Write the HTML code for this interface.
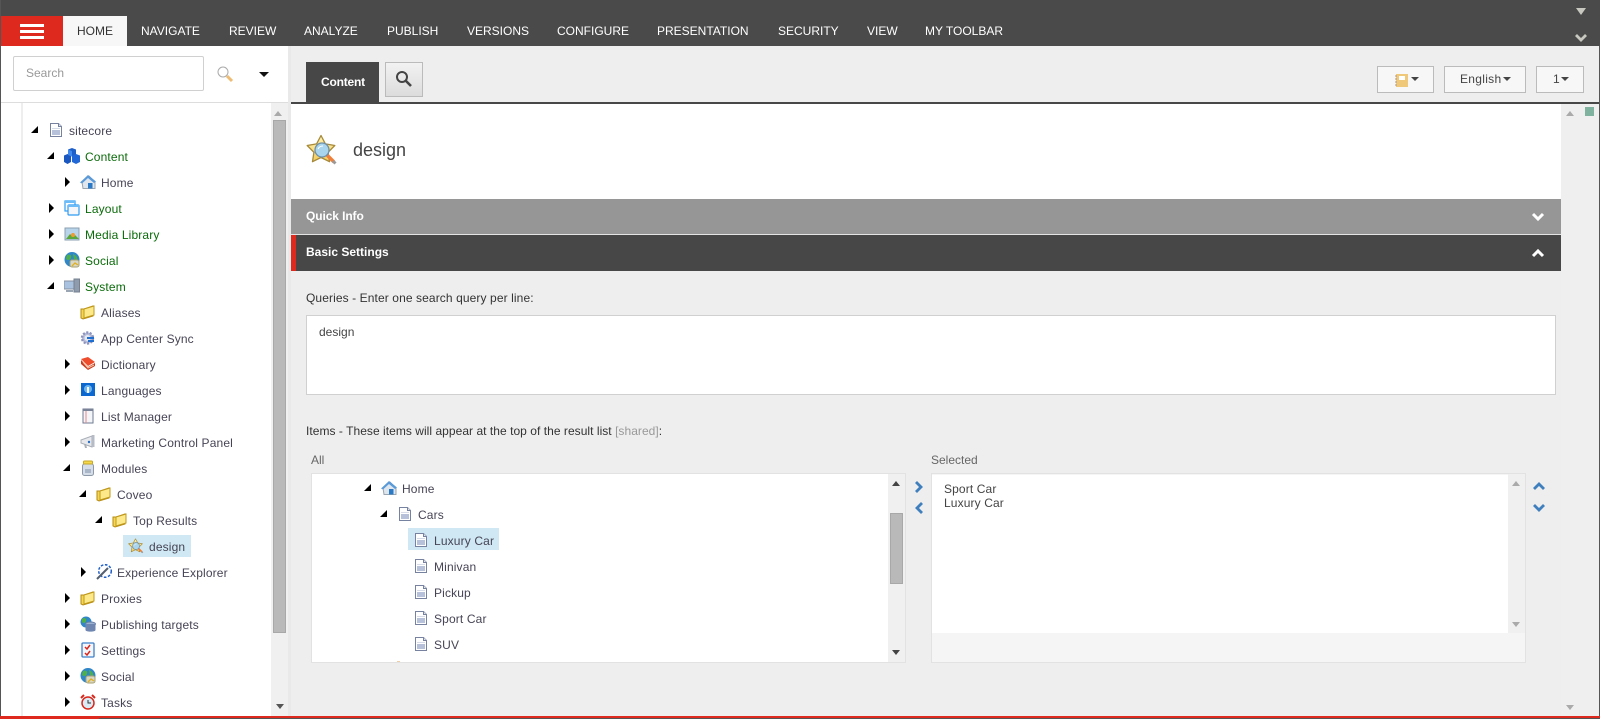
<!DOCTYPE html>
<html lang="en"><head><meta charset="utf-8"><title>Content Editor</title>
<style>
html,body{margin:0;padding:0;width:1600px;height:719px;overflow:hidden;background:#eee}
body{position:relative;font:12px/20px "Liberation Sans",Arial,sans-serif;color:#444}
div,span,svg{position:absolute;display:block}
.n{top:21px;color:#fff;font-size:12px;line-height:20px;white-space:nowrap}
.t{white-space:nowrap;color:#474455;height:20px;margin-top:1px;letter-spacing:.14px}
.g{color:#0b6b0b}
.r{width:0;height:0;border-style:solid;border-width:5px 0 5px 5px;border-color:transparent transparent transparent #000}
.d{width:0;height:0;border-style:solid;border-width:0 0 7px 7px;border-color:transparent transparent #000 transparent;margin:-1px 0 0 -1px}
.i{width:16px;height:16px}
.btn{background:#f7f7f7;border:1px solid #bbb;box-sizing:border-box;height:27px;top:66px}
.c{width:0;height:0;border-style:solid;border-width:4px 4px 0 4px;border-color:#444 transparent transparent transparent}
.up{width:0;height:0;border-style:solid;border-width:0 4px 5px 4px;border-color:transparent transparent #444 transparent}
.dn{width:0;height:0;border-style:solid;border-width:5px 4px 0 4px;border-color:#444 transparent transparent transparent}
</style></head><body>
<svg width="0" height="0" style="position:absolute">
<defs>
<linearGradient id="sg" x1="0" y1="0" x2="0" y2="1"><stop offset="0" stop-color="#fff4b8"/><stop offset="1" stop-color="#f4cb58"/></linearGradient>
<symbol id="doc" viewBox="0 0 16 16"><path d="M2.5 1.500h8l3 3v10h-11z" fill="#fff" stroke="#76829f"/><path d="M10.500 1.500v3h3" fill="#dfe4ee" stroke="#76829f"/><rect x="4" y="8" width="8" height="5" fill="#b7c2da"/><rect x="4" y="6" width="8" height="1" fill="#d5dbe8"/></symbol>
<symbol id="cube" viewBox="0 0 16 16"><path d="M4 1.500L8 0l4 1.500V7L8 8.500 4 7z" fill="#1f5fc8"/><path d="M0 7.500L3.500 6 7 7.500V14l-3.500 2L0 14z" fill="#1b57c0"/><path d="M8 7.500L12 6l4 1.500V14l-4 2-4-2z" fill="#2168d6"/><path d="M4 1.500L8 3v5.500L4 7z" fill="#3f8aec"/></symbol>
<symbol id="home" viewBox="0 0 16 16"><path d="M2 8l7-6 6 6v6.500H3z" fill="#dfe6ee" stroke="#9aa5b0"/><path d="M0 8.500L8 1l8 6.500-2 1.500-6-5-6 5.500z" fill="#5a9ad8"/><rect x="8" y="9" width="4.500" height="5.500" fill="#2a7ac8"/></symbol>
<symbol id="lay" viewBox="0 0 16 16"><rect x="1" y="1" width="10" height="10" fill="#fff" stroke="#2f9cf2" stroke-width="1.200"/><rect x="1" y="1" width="10" height="2" fill="#6dbcf8"/><rect x="4" y="5" width="11" height="10" rx="1" fill="#f4f6fa" stroke="#2f9cf2" stroke-width="1.200"/><rect x="4" y="5" width="11" height="2" fill="#6dbcf8"/></symbol>
<symbol id="med" viewBox="0 0 16 16"><rect x="1" y="2" width="14" height="12" fill="#b8d4ea" stroke="#8a9fb0"/><path d="M2 13l4-5 3 3 2-2 4 4z" fill="#5aa83c"/><circle cx="9" cy="9" r="2" fill="#f09a30"/></symbol>
<symbol id="glob" viewBox="0 0 16 16"><circle cx="8" cy="7.500" r="7.500" fill="#2f86c8"/><path d="M3 3c3-1 5 0 4 3S3 8 2 7zM9 2c3 1 5 4 4 6l-3-1z" fill="#4fb04a"/><rect x="6" y="8" width="9" height="7" rx="2" fill="#d7d7c8" stroke="#a9a070"/><path d="M8 14l3-3 3 2" stroke="#e0b020" fill="none" stroke-width="1.300"/></symbol>
<symbol id="sys" viewBox="0 0 16 16"><rect x="0" y="3" width="10" height="8" fill="#a9c2e0" stroke="#8893a3"/><rect x="2" y="12" width="7" height="2" fill="#9aa5b3"/><rect x="10" y="1" width="5.500" height="13" fill="#8f9cae" stroke="#76808f"/></symbol>
<symbol id="fol" viewBox="0 0 16 16"><path d="M1 5h3l9-3v10l-10 3-2-1z" fill="#f7d64f" stroke="#b58a12"/><path d="M4 5l10-3v9l-10 3z" fill="#fde88a" stroke="#c09a1c"/></symbol>
<symbol id="gear" viewBox="0 0 16 16"><circle cx="7.500" cy="8" r="5.500" fill="#b7bcd9" stroke="#8c93bd" stroke-width="2.400" stroke-dasharray="2 1.500"/><circle cx="7.500" cy="8" r="3" fill="#e7e9f2"/><path d="M7 8h7M8 11h6" stroke="#1f6fd0" stroke-width="2"/></symbol>
<symbol id="book" viewBox="0 0 16 16"><path d="M1 3l7-2 7 5-7 4z" fill="#ee4d2d"/><path d="M1 4l7 7 7-4v3l-7 4-7-6z" fill="#c93a20"/><path d="M3 6l5 6 6-3" stroke="#f7c4a0" fill="none"/></symbol>
<symbol id="lang" viewBox="0 0 16 16"><rect x="1" y="1" width="14" height="13" fill="#0c68cf"/><circle cx="8" cy="7" r="4" fill="#6cb6f0"/><rect x="7" y="5" width="2" height="6" fill="#fff"/></symbol>
<symbol id="list" viewBox="0 0 16 16"><rect x="3" y="1" width="10" height="14" fill="#f3f5f9" stroke="#6f7a92"/><rect x="3" y="1" width="10" height="2" fill="#7a8298"/><path d="M6 3v12" stroke="#e88"/></symbol>
<symbol id="meg" viewBox="0 0 16 16"><path d="M1 6l11-4v11L1 9z" fill="#e6e8ec" stroke="#aab0b8"/><rect x="12" y="1" width="2.500" height="12" fill="#b6bcc6"/><path d="M4 10l1 4h2l-1-4z" fill="#aab0b8"/><circle cx="9" cy="8" r="1.200" fill="#2a6fbf"/></symbol>
<symbol id="jar" viewBox="0 0 16 16"><rect x="2.500" y="4" width="11" height="11.500" rx="2" fill="#d4dde8" stroke="#8d99a8"/><rect x="3.500" y="1" width="9" height="3" rx="1" fill="#f4d84a" stroke="#c5a526"/><rect x="5" y="9" width="6" height="4" fill="#a8b6c8"/></symbol>
<symbol id="wand" viewBox="0 0 16 16"><circle cx="9" cy="7" r="6.300" fill="none" stroke="#1f5fc8" stroke-width="1.500" stroke-dasharray="2.600 1.600"/><path d="M1 15L12 4" stroke="#55606e" stroke-width="2"/></symbol>
<symbol id="pub" viewBox="0 0 16 16"><circle cx="6" cy="6" r="5.500" fill="#2f86c8"/><path d="M2 3c2-2 5-1 4 2s-3 2-4 1z" fill="#4fb04a"/><ellipse cx="10.500" cy="8" rx="5" ry="2" fill="#9bb2d2" stroke="#6a7fa5"/><path d="M5.500 8v6c0 1 2 1.600 5 1.600s5-.6 5-1.600V8z" fill="#6f86b0"/></symbol>
<symbol id="chk" viewBox="0 0 16 16"><rect x="2" y="1" width="12" height="14" rx="1" fill="#f3f6fb" stroke="#3f80c8" stroke-width="1.300"/><path d="M5 5l2 2 3-4M5 11l2 2 3-4" stroke="#d8281c" stroke-width="1.500" fill="none"/></symbol>
<symbol id="clk" viewBox="0 0 16 16"><circle cx="8" cy="9" r="6" fill="#d9ecf5" stroke="#d8281c" stroke-width="1.500"/><path d="M1 4l3-3M15 4l-3-3" stroke="#d8281c" stroke-width="2"/><path d="M8 6v3h3" stroke="#333" fill="none"/></symbol>
<symbol id="star" viewBox="0 0 32 32"><path d="M15 1.500L19.400 9.900 28.800 11.500 22.100 18.300 23.500 27.700 15 23.500 6.500 27.700 7.900 18.300 1.200 11.500 10.600 9.900z" fill="url(#sg)" stroke="#a68a3a" stroke-width="1.300" stroke-linejoin="round"/><path d="M21 21l7 7" stroke="#ef7f3a" stroke-width="3.400"/><path d="M27 27l2.500 2.500" stroke="#999" stroke-width="3"/><circle cx="16" cy="16" r="7" fill="#a9d6ee" stroke="#6e8fa8" stroke-width="1.300"/><path d="M12 15c1-2 3-3 5-3" stroke="#fff" fill="none"/></symbol>
</defs></svg>

<!-- top bar -->
<div style="left:0;top:0;width:1600px;height:46px;background:#4a4a4a"></div>
<div style="left:1px;top:16px;width:62px;height:30px;background:#de2a1e"></div>
<div style="left:20px;top:24px;width:24px;height:3px;background:#fff"></div>
<div style="left:20px;top:30px;width:24px;height:3px;background:#fff"></div>
<div style="left:20px;top:36px;width:24px;height:3px;background:#fff"></div>
<div style="left:63px;top:16px;width:64px;height:30px;background:#f7f7f7"></div>
<div class="n" style="left:77px;color:#333">HOME</div>
<div class="n" style="left:141px">NAVIGATE</div>
<div class="n" style="left:229px">REVIEW</div>
<div class="n" style="left:304px">ANALYZE</div>
<div class="n" style="left:387px">PUBLISH</div>
<div class="n" style="left:467px">VERSIONS</div>
<div class="n" style="left:557px">CONFIGURE</div>
<div class="n" style="left:657px">PRESENTATION</div>
<div class="n" style="left:778px">SECURITY</div>
<div class="n" style="left:867px">VIEW</div>
<div class="n" style="left:925px">MY TOOLBAR</div>
<svg style="left:1575px;top:7px" width="12" height="9"><path d="M1 1h10L6 8z" fill="#c8c8c0"/></svg>
<svg style="left:1574px;top:33px" width="14" height="10"><path d="M2 2l5 5 5-5" fill="none" stroke="#c8c8c0" stroke-width="2.800"/></svg>

<!-- left panel -->
<div style="left:1px;top:46px;width:287px;height:670px;background:#fff"></div>
<div style="left:288px;top:46px;width:3px;height:670px;background:#e9e9e9"></div>
<div style="left:0;top:0;width:1px;height:719px;background:#555"></div>
<div style="left:13px;top:56px;width:191px;height:35px;box-sizing:border-box;border:1px solid #d0d0d0;border-radius:2px;background:#fff"></div>
<div style="left:26px;top:63px;color:#999">Search</div>
<svg style="left:216px;top:65px" width="18" height="18"><circle cx="7" cy="7" r="5" fill="#fff" stroke="#aaa" stroke-width="1"/><path d="M11 11l5 5" stroke="#eebc75" stroke-width="3"/></svg>
<div style="left:259px;top:72px;width:0;height:0;border-style:solid;border-width:5px 5px 0 5px;border-color:#111 transparent transparent transparent"></div>
<div style="left:1px;top:102px;width:287px;height:1px;background:#ddd"></div>
<div style="left:21px;top:103px;width:2px;height:613px;background:#eee"></div>
<div style="left:271px;top:103px;width:17px;height:613px;background:#f0f0f0"></div>
<div style="left:274px;top:111px;width:0;height:0;border-style:solid;border-width:0 4px 5px 4px;border-color:transparent transparent #aaa transparent"></div>
<div style="left:273px;top:120px;width:13px;height:513px;background:#b9b9b9;border:1px solid #a8a8a8;box-sizing:border-box"></div>
<div class="dn" style="left:276px;top:704px;border-top-color:#555"></div>

<div class="d" style="left:32px;top:127px"></div><svg class="i" style="left:48px;top:122px"><use href="#doc"/></svg><div class="t" style="left:69px;top:120px">sitecore</div>
<div class="d" style="left:48px;top:153px"></div><svg class="i" style="left:64px;top:148px"><use href="#cube"/></svg><div class="t g" style="left:85px;top:146px">Content</div>
<div class="r" style="left:65px;top:177px"></div><svg class="i" style="left:80px;top:174px"><use href="#home"/></svg><div class="t" style="left:101px;top:172px">Home</div>
<div class="r" style="left:49px;top:203px"></div><svg class="i" style="left:64px;top:200px"><use href="#lay"/></svg><div class="t g" style="left:85px;top:198px">Layout</div>
<div class="r" style="left:49px;top:229px"></div><svg class="i" style="left:64px;top:226px"><use href="#med"/></svg><div class="t g" style="left:85px;top:224px">Media Library</div>
<div class="r" style="left:49px;top:255px"></div><svg class="i" style="left:64px;top:252px"><use href="#glob"/></svg><div class="t g" style="left:85px;top:250px">Social</div>
<div class="d" style="left:48px;top:283px"></div><svg class="i" style="left:64px;top:278px"><use href="#sys"/></svg><div class="t g" style="left:85px;top:276px">System</div>
<svg class="i" style="left:80px;top:304px"><use href="#fol"/></svg><div class="t" style="left:101px;top:302px">Aliases</div>
<svg class="i" style="left:80px;top:330px"><use href="#gear"/></svg><div class="t" style="left:101px;top:328px">App Center Sync</div>
<div class="r" style="left:65px;top:359px"></div><svg class="i" style="left:80px;top:356px"><use href="#book"/></svg><div class="t" style="left:101px;top:354px">Dictionary</div>
<div class="r" style="left:65px;top:385px"></div><svg class="i" style="left:80px;top:382px"><use href="#lang"/></svg><div class="t" style="left:101px;top:380px">Languages</div>
<div class="r" style="left:65px;top:411px"></div><svg class="i" style="left:80px;top:408px"><use href="#list"/></svg><div class="t" style="left:101px;top:406px">List Manager</div>
<div class="r" style="left:65px;top:437px"></div><svg class="i" style="left:80px;top:434px"><use href="#meg"/></svg><div class="t" style="left:101px;top:432px">Marketing Control Panel</div>
<div class="d" style="left:64px;top:465px"></div><svg class="i" style="left:80px;top:460px"><use href="#jar"/></svg><div class="t" style="left:101px;top:458px">Modules</div>
<div class="d" style="left:80px;top:491px"></div><svg class="i" style="left:96px;top:486px"><use href="#fol"/></svg><div class="t" style="left:117px;top:484px">Coveo</div>
<div class="d" style="left:96px;top:517px"></div><svg class="i" style="left:112px;top:512px"><use href="#fol"/></svg><div class="t" style="left:133px;top:510px">Top Results</div>
<div style="left:123px;top:535px;width:68px;height:22px;background:#cfe8f3"></div><svg class="i" style="left:128px;top:538px"><use href="#star"/></svg><div class="t" style="left:149px;top:536px">design</div>
<div class="r" style="left:81px;top:567px"></div><svg class="i" style="left:96px;top:564px"><use href="#wand"/></svg><div class="t" style="left:117px;top:562px">Experience Explorer</div>
<div class="r" style="left:65px;top:593px"></div><svg class="i" style="left:80px;top:590px"><use href="#fol"/></svg><div class="t" style="left:101px;top:588px">Proxies</div>
<div class="r" style="left:65px;top:619px"></div><svg class="i" style="left:80px;top:616px"><use href="#pub"/></svg><div class="t" style="left:101px;top:614px">Publishing targets</div>
<div class="r" style="left:65px;top:645px"></div><svg class="i" style="left:80px;top:642px"><use href="#chk"/></svg><div class="t" style="left:101px;top:640px">Settings</div>
<div class="r" style="left:65px;top:671px"></div><svg class="i" style="left:80px;top:668px"><use href="#glob"/></svg><div class="t" style="left:101px;top:666px">Social</div>
<div class="r" style="left:65px;top:697px"></div><svg class="i" style="left:80px;top:694px"><use href="#clk"/></svg><div class="t" style="left:101px;top:692px">Tasks</div>

<!-- header of content -->
<div style="left:306px;top:62px;width:73px;height:40px;background:#474747"></div>
<div style="left:321px;top:72px;color:#fff;font-weight:bold;letter-spacing:-.2px">Content</div>
<div style="left:385px;top:62px;width:38px;height:35px;box-sizing:border-box;border:1px solid #bbb;background:linear-gradient(#f2f2f2,#dcdcdc)"></div>
<svg style="left:395px;top:70px" width="18" height="18"><circle cx="7" cy="7" r="5" fill="none" stroke="#444" stroke-width="2"/><path d="M11 11l5 5" stroke="#444" stroke-width="2.600"/></svg>
<div class="btn" style="left:1377px;width:57px"></div>
<svg style="left:1395px;top:74px" width="13" height="13"><rect x="1" width="12" height="13" fill="#f0c87a"/><rect x="4" y="2" width="6" height="4" fill="#fff"/><path d="M0 2h2M0 5h2M0 8h2M0 11h2" stroke="#a98"/></svg>
<div class="c" style="left:1411px;top:77px"></div>
<div class="btn" style="left:1444px;width:82px"></div>
<div style="left:1460px;top:69px;color:#444;letter-spacing:.3px">English</div>
<div class="c" style="left:1503px;top:77px"></div>
<div class="btn" style="left:1536px;width:48px"></div>
<div style="left:1553px;top:69px;color:#444">1</div>
<div class="c" style="left:1561px;top:77px"></div>
<div style="left:291px;top:102px;width:1309px;height:2px;background:#474747"></div>

<!-- content -->
<div style="left:291px;top:104px;width:1270px;height:95px;background:#fff"></div>
<svg style="left:306px;top:134px" width="32" height="32"><use href="#star"/></svg>
<div style="left:353px;top:140px;font-size:18px;color:#444">design</div>
<div style="left:291px;top:199px;width:1270px;height:35px;background:#969696"></div>
<div style="left:306px;top:206px;color:#fff;font-weight:bold;letter-spacing:-.1px">Quick Info</div>
<svg style="left:1531px;top:212px" width="14" height="11"><path d="M2 2l5 5 5-5" fill="none" stroke="#fff" stroke-width="3"/></svg>
<div style="left:291px;top:234px;width:1270px;height:1px;background:#e4e4e4"></div>
<div style="left:291px;top:235px;width:1270px;height:36px;background:#474747"></div>
<div style="left:291px;top:235px;width:5px;height:36px;background:#de2a1e"></div>
<div style="left:306px;top:242px;color:#fff;font-weight:bold">Basic Settings</div>
<svg style="left:1531px;top:248px" width="14" height="11"><path d="M2 8l5-5 5 5" fill="none" stroke="#fff" stroke-width="3"/></svg>

<div style="left:306px;top:288px;color:#333;letter-spacing:.1px">Queries - Enter one search query per line:</div>
<div style="left:306px;top:315px;width:1250px;height:80px;box-sizing:border-box;background:#fff;border:1px solid #d0d0d0"></div>
<div style="left:319px;top:322px;color:#444">design</div>

<div style="left:306px;top:421px;color:#333;letter-spacing:.04px">Items - These items will appear at the top of the result list <span style="position:static;display:inline;color:#999">[shared]</span>:</div>
<div style="left:311px;top:450px;color:#666">All</div>
<div style="left:931px;top:450px;color:#666">Selected</div>

<div style="left:311px;top:473px;width:595px;height:190px;box-sizing:border-box;background:#fff;border:1px solid #e2e2e2"></div>
<div style="left:888px;top:474px;width:17px;height:188px;background:#f0f0f0"></div>
<div class="up" style="left:892px;top:481px"></div>
<div style="left:890px;top:513px;width:13px;height:71px;box-sizing:border-box;background:#b9b9b9;border:1px solid #a8a8a8"></div>
<div class="dn" style="left:892px;top:650px"></div>

<div class="d" style="left:365px;top:485px"></div><svg class="i" style="left:381px;top:480px"><use href="#home"/></svg><div class="t" style="left:402px;top:478px">Home</div>
<div class="d" style="left:381px;top:511px"></div><svg class="i" style="left:397px;top:506px"><use href="#doc"/></svg><div class="t" style="left:418px;top:504px">Cars</div>
<div style="left:408px;top:528px;width:91px;height:22px;background:#cfe8f3"></div>
<svg class="i" style="left:413px;top:532px"><use href="#doc"/></svg><div class="t" style="left:434px;top:530px">Luxury Car</div>
<svg class="i" style="left:413px;top:558px"><use href="#doc"/></svg><div class="t" style="left:434px;top:556px">Minivan</div>
<svg class="i" style="left:413px;top:584px"><use href="#doc"/></svg><div class="t" style="left:434px;top:582px">Pickup</div>
<svg class="i" style="left:413px;top:610px"><use href="#doc"/></svg><div class="t" style="left:434px;top:608px">Sport Car</div>
<svg class="i" style="left:413px;top:636px"><use href="#doc"/></svg><div class="t" style="left:434px;top:634px">SUV</div>
<div style="left:397px;top:661px;width:3px;height:1px;background:#f0cfa8"></div>

<svg style="left:913px;top:480px" width="12" height="14"><path d="M3 2l5 5-5 5" fill="none" stroke="#3f7fbd" stroke-width="2.800"/></svg>
<svg style="left:913px;top:501px" width="12" height="14"><path d="M9 2L4 7l5 5" fill="none" stroke="#3f7fbd" stroke-width="2.800"/></svg>

<div style="left:931px;top:473px;width:595px;height:190px;box-sizing:border-box;background:#f5f5f5;border:1px solid #e2e2e2"></div>
<div style="left:932px;top:475px;width:576px;height:158px;background:#fff"></div>
<div style="left:1508px;top:474px;width:17px;height:159px;background:#f0f0f0"></div>
<div class="up" style="left:1512px;top:481px;border-bottom-color:#aaa"></div>
<div class="dn" style="left:1512px;top:622px;border-top-color:#aaa"></div>
<div style="left:944px;top:479px;color:#444;letter-spacing:.12px">Sport Car</div>
<div style="left:944px;top:493px;color:#444;letter-spacing:.12px">Luxury Car</div>
<svg style="left:1532px;top:481px" width="14" height="11"><path d="M2 8l5-5 5 5" fill="none" stroke="#3f7fbd" stroke-width="2.800"/></svg>
<svg style="left:1532px;top:503px" width="14" height="11"><path d="M2 2l5 5 5-5" fill="none" stroke="#3f7fbd" stroke-width="2.800"/></svg>

<!-- right rail -->
<div style="left:1561px;top:104px;width:38px;height:612px;background:#efefef"></div>
<div class="up" style="left:1566px;top:111px;border-bottom-color:#aaa"></div>
<div style="left:1585px;top:107px;width:9px;height:9px;background:#7fb3a0"></div>
<div class="dn" style="left:1566px;top:705px;border-top-color:#aaa"></div>
<div style="left:1599px;top:46px;width:1px;height:673px;background:#555"></div>

<!-- bottom -->
<div style="left:0;top:716px;width:1600px;height:2px;background:#de2a1e"></div>
<div style="left:0;top:718px;width:1600px;height:1px;background:#555"></div>
<div style="left:0;top:718px;width:99px;height:1px;background:#de2a1e"></div>
</body></html>
